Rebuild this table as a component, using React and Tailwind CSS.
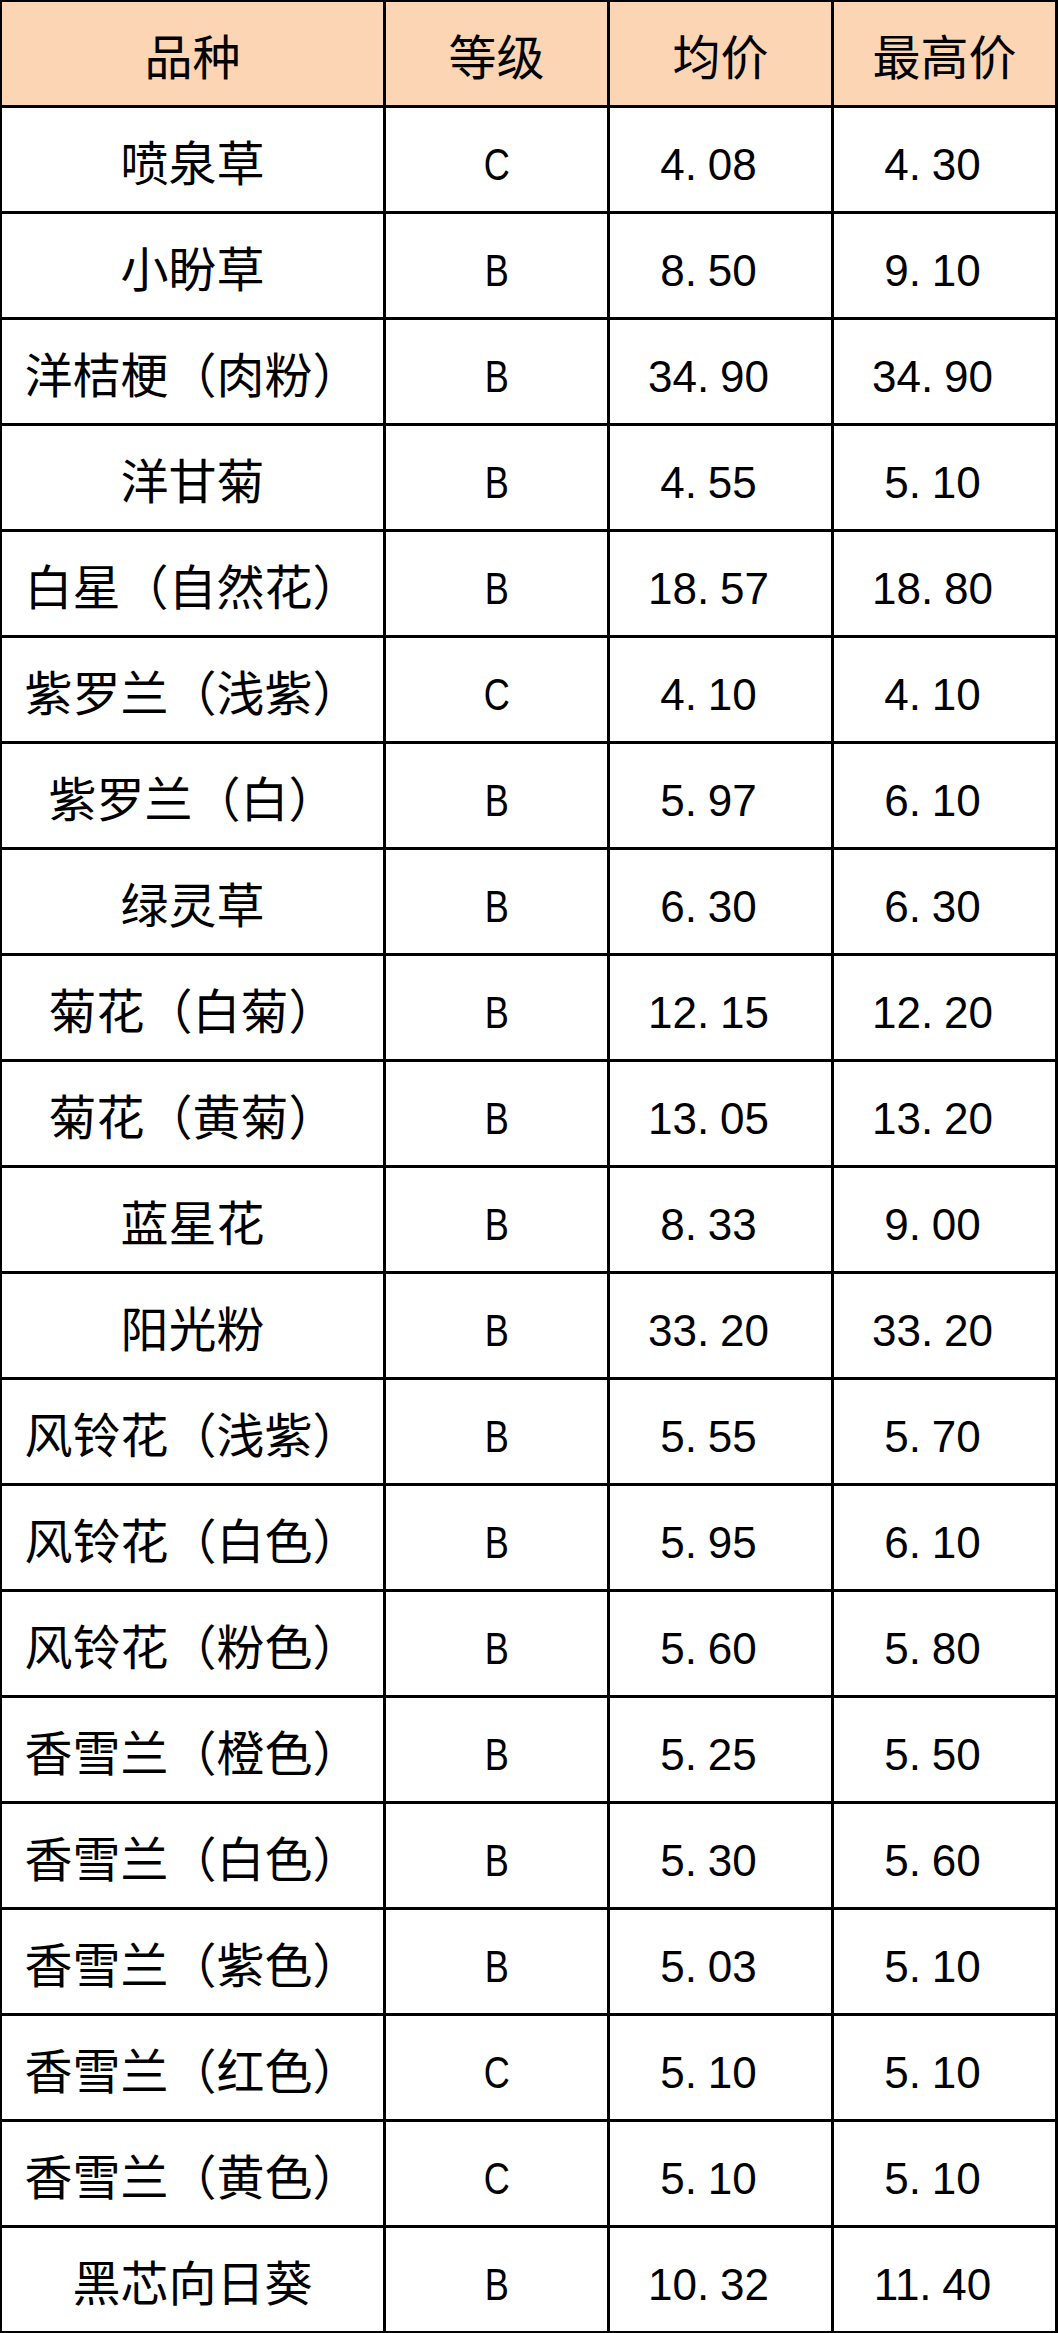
import React from "react";

const rows = [
  ["喷泉草", "C", "4.08", "4.30"],
  ["小盼草", "B", "8.50", "9.10"],
  ["洋桔梗（肉粉）", "B", "34.90", "34.90"],
  ["洋甘菊", "B", "4.55", "5.10"],
  ["白星（自然花）", "B", "18.57", "18.80"],
  ["紫罗兰（浅紫）", "C", "4.10", "4.10"],
  ["紫罗兰（白）", "B", "5.97", "6.10"],
  ["绿灵草", "B", "6.30", "6.30"],
  ["菊花（白菊）", "B", "12.15", "12.20"],
  ["菊花（黄菊）", "B", "13.05", "13.20"],
  ["蓝星花", "B", "8.33", "9.00"],
  ["阳光粉", "B", "33.20", "33.20"],
  ["风铃花（浅紫）", "B", "5.55", "5.70"],
  ["风铃花（白色）", "B", "5.95", "6.10"],
  ["风铃花（粉色）", "B", "5.60", "5.80"],
  ["香雪兰（橙色）", "B", "5.25", "5.50"],
  ["香雪兰（白色）", "B", "5.30", "5.60"],
  ["香雪兰（紫色）", "B", "5.03", "5.10"],
  ["香雪兰（红色）", "C", "5.10", "5.10"],
  ["香雪兰（黄色）", "C", "5.10", "5.10"],
  ["黑芯向日葵", "B", "10.32", "11.40"],
];

const cols = "grid grid-cols-[384px_224px_224px_224px]";
const cell =
  "h-[106px] flex items-center justify-center pt-[10px] border-r-[3px] border-b-[3px] border-black";

// prices: the dot takes a full digit slot, like in the sheet
const Price = ({ value }) => {
  const [whole, frac] = value.split(".");
  return (
    <span className="text-[44px] tabular-nums">
      {whole}
      <span className="inline-block w-[23px] text-left">.</span>
      {frac}
    </span>
  );
};

const App = () => {
  return (
    <div
      className="w-[1058px] bg-white text-black text-[48px] leading-none border-t-2 border-l-2 border-black"
      style={{ fontFamily: '"Liberation Sans", "Noto Sans CJK SC", sans-serif' }}
    >
      <div className={`${cols} bg-[#fcd5b4]`}>
        <div className={cell}>品种</div>
        <div className={cell}>等级</div>
        <div className={cell}>均价</div>
        <div className={cell}>最高价</div>
      </div>

      {rows.map(([name, grade, avg, max]) => (
        <div key={name} className={cols}>
          <div className={cell}>{name}</div>
          <div className={cell}>
            <span className="inline-block text-[44px] scale-x-[0.82]">{grade}</span>
          </div>
          <div className={`${cell} pr-[24px]`}>
            <Price value={avg} />
          </div>
          <div className={`${cell} pr-[24px]`}>
            <Price value={max} />
          </div>
        </div>
      ))}
    </div>
  );
};

export default App;
